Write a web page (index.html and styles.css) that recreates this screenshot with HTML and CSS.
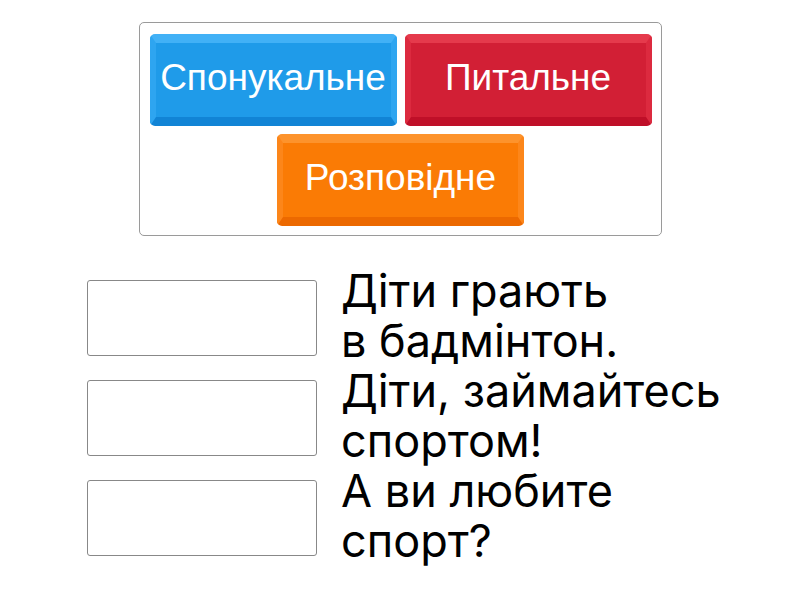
FILE: index.html
```html
<!DOCTYPE html>
<html lang="uk">
<head>
<meta charset="utf-8">
<link rel="stylesheet" href="styles.css">
</head>
<body>
<div class="page">
  <div class="bank">
    <div class="tile blue">Спонукальне</div>
    <div class="tile red">Питальне</div>
    <div class="tile orange">Розповідне</div>
  </div>
  <div class="list">
    <div class="row">
      <div class="slot"></div>
      <div class="phrase">Діти грають<br>в бадмінтон.</div>
    </div>
    <div class="row">
      <div class="slot"></div>
      <div class="phrase">Діти, займайтесь<br>спортом!</div>
    </div>
    <div class="row">
      <div class="slot"></div>
      <div class="phrase">А ви любите<br>спорт?</div>
    </div>
  </div>
</div>
</body>
</html>
```

FILE: styles.css
```css
html, body {
  margin: 0;
  padding: 0;
  background: #ffffff;
}
.page {
  width: 800px;
  height: 600px;
  padding-top: 22px;
  box-sizing: border-box;
}
.bank {
  width: 523px;
  margin: 0 auto;
  box-sizing: border-box;
  border: 1px solid #9a9a9a;
  border-radius: 5px;
  padding: 11px 9px 9px 10px;
  display: flex;
  flex-wrap: wrap;
  justify-content: center;
  gap: 8px;
}
.tile {
  width: 247px;
  height: 92px;
  box-sizing: border-box;
  border-radius: 5px;
  border-style: solid;
  border-width: 9px 6px 9px 6px;
  padding-bottom: 5px;
  display: flex;
  align-items: center;
  justify-content: center;
  color: #ffffff;
  font-family: "Liberation Sans", Arial, sans-serif;
  font-size: 37px;
  white-space: nowrap;
}
.blue {
  background: #1f9be9;
  border-color: #42b1f6 #2ea5f0 #1184d5 #2ea5f0;
}
.red {
  background: #d21f35;
  border-color: #e53a4c #dc2a3f #bf0f28 #dc2a3f;
}
.orange {
  background: #fa7b05;
  border-color: #fd932c #fc861a #ec6900 #fc861a;
}
.list {
  margin-top: 32px;
  padding-left: 87px;
  display: flex;
  flex-direction: column;
}
.row {
  display: flex;
  align-items: center;
  gap: 24px;
  height: 100px;
}
.slot {
  width: 230px;
  height: 76px;
  box-sizing: border-box;
  border: 1px solid #888888;
  border-radius: 3px;
  flex: none;
}
.phrase {
  font-family: Inter, sans-serif;
  font-size: 45px;
  font-weight: 400;
  line-height: 50px;
  padding-bottom: 4px;
  color: #000000;
}
```
